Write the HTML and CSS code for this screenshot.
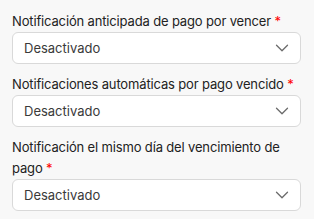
FILE: index.html
```html
<!DOCTYPE html>
<html lang="es">
<head>
<meta charset="UTF-8" />
<title>Notificaciones</title>
<link rel="stylesheet" href="styles.css">
</head>
<body>
<div class="form">
  <!-- Aviso antes del vencimiento -->
  <div class="field">
    <label>Notificación anticipada de pago por vencer <span class="req">*</span></label>
    <div class="select">
      <span>Desactivado</span>
      <svg width="14" height="8" viewBox="0 0 14 8"><path d="M1.5 1.2l5.5 5.5 5.5-5.5" fill="none" stroke="#6b6b6b" stroke-width="1.3" stroke-linecap="round" stroke-linejoin="round"/></svg>
    </div>
  </div>

  <!-- Aviso de pago vencido -->
  <div class="field">
    <label>Notificaciones automáticas por pago vencido <span class="req">*</span></label>
    <div class="select">
      <span>Desactivado</span>
      <svg width="14" height="8" viewBox="0 0 14 8"><path d="M1.5 1.2l5.5 5.5 5.5-5.5" fill="none" stroke="#6b6b6b" stroke-width="1.3" stroke-linecap="round" stroke-linejoin="round"/></svg>
    </div>
  </div>

  <!-- Aviso el dia del vencimiento -->
  <div class="field">
    <label>Notificación el mismo día del vencimiento de pago <span class="req">*</span></label>
    <div class="select">
      <span>Desactivado</span>
      <svg width="14" height="8" viewBox="0 0 14 8"><path d="M1.5 1.2l5.5 5.5 5.5-5.5" fill="none" stroke="#6b6b6b" stroke-width="1.3" stroke-linecap="round" stroke-linejoin="round"/></svg>
    </div>
  </div>
</div>
</body>
</html>
```
FILE: styles.css
```css
body {
  margin: 0;
  background: #f8f8f8;
  font-family: Inter, "Noto Sans", sans-serif;
  color: #222;
}
.form {
  padding: 11px 13px 0 12px;
}
.field {
  margin-bottom: 10px;
}
label {
  display: block;
  font-size: 13px;
  line-height: 21px;
  letter-spacing: -0.15px;
}
.req {
  color: #f00;
}
.select {
  display: flex;
  align-items: center;
  justify-content: space-between;
  height: 32px;
  box-sizing: border-box;
  padding: 0 11px 0 11px;
  background: #fff;
  border: 1px solid #d9d9d9;
  border-radius: 6px;
  font-size: 13px;
  color: #3a3a3a;
}
```
